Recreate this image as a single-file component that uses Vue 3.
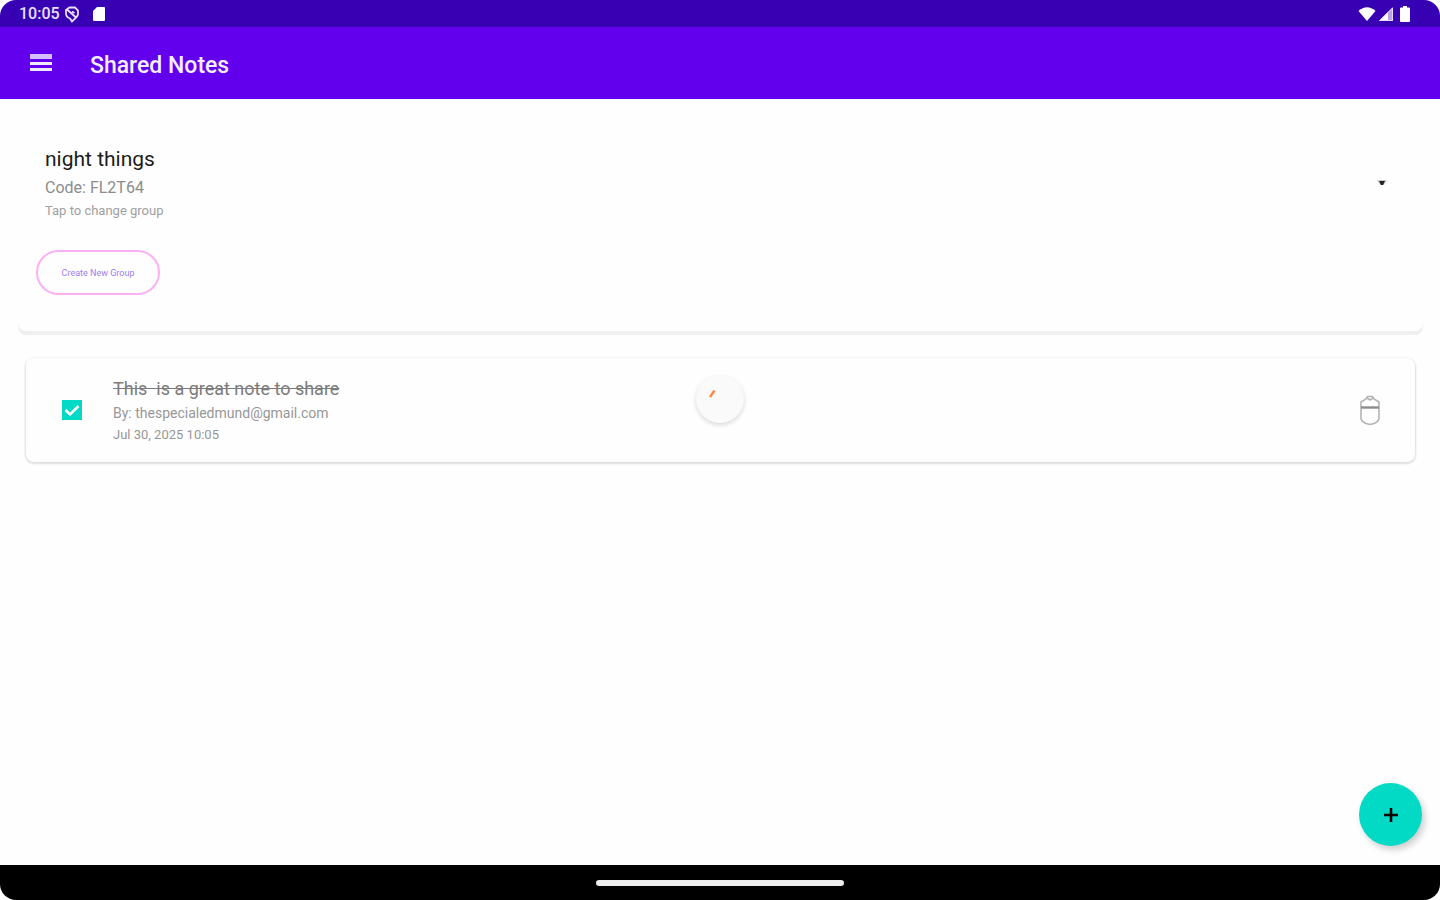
<script setup>
import { ref } from 'vue'

const group = { name: 'night things', code: 'FL2T64' }
const notes = ref([
  {
    id: 1,
    text: 'This  is a great note to share',
    author: 'thespecialedmund@gmail.com',
    date: 'Jul 30, 2025 10:05',
    done: true,
  },
])
</script>

<template>
  <div class="screen">
    <div class="status">
      <span class="clock">10:05</span>
      <svg class="st-shield" viewBox="0 0 16 18" width="16" height="18" fill="none" stroke="#e9e0ff" stroke-width="1.8">
        <path d="M5.500 2.500H11L14 5.500V9.500C13.500 12 11 13 8 16.500L6 13.500C3.500 12.500 2 11 2 8.500V5Z" />
        <path d="M3 4.500L12 12.500M8 6.500L10.500 8" />
      </svg>
      <svg class="st-card" viewBox="0 0 14 16" width="14" height="16" fill="#fff">
        <path d="M5 1H12Q13 1 13 2V14Q13 15 12 15H2Q1 15 1 14V5Z" />
      </svg>
      <div class="status-right">
        <svg viewBox="0 0 18 16" width="18" height="16" fill="#fff">
          <path d="M0.500 5Q9 -2.500 17.500 5L9 15Z" />
        </svg>
        <svg viewBox="0 0 16 16" width="16" height="16">
          <path d="M15 1V15H1Z" fill="#b9a3ec" />
          <path d="M10 6V15H1Z" fill="#fff" />
          <path d="M14.500 2V14.500H2Z" fill="none" stroke="#e6dcff" />
        </svg>
        <svg class="battery" viewBox="0 0 12 18" width="12" height="18" fill="#fff">
          <path d="M4 1H8V2.500H10Q11 2.500 11 3.500V16Q11 17 10 17H2Q1 17 1 16V3.500Q1 2.500 2 2.500H4Z" />
        </svg>
      </div>
    </div>

    <header class="appbar">
      <button class="menu" type="button" aria-label="Open menu">
        <svg viewBox="0 0 24 18" width="24" height="18">
          <path d="M1 0H23V5H1Z" fill="#d3bdfb" />
          <path d="M1 8H23V11H1ZM1 14H23V17H1Z" fill="#f1eaff" />
        </svg>
      </button>
      <h1>Shared Notes</h1>
    </header>

    <main>
      <section class="group">
        <button class="picker" type="button">
          <span class="lines">
            <span class="name">{{ group.name }}</span>
            <span class="code">Code: {{ group.code }}</span>
            <span class="hint">Tap to change group</span>
          </span>
          <svg viewBox="0 0 10 6" width="10" height="6">
            <path d="M0 0H10L7 5H3Z" fill="#ccc" />
            <path d="M2 1H8L6 5H4Z" fill="#222" />
          </svg>
        </button>
        <button class="create" type="button">Create New Group</button>
      </section>

      <ul class="notes">
        <li v-for="note in notes" :key="note.id" class="note">
          <input :id="'note-' + note.id" v-model="note.done" type="checkbox" />
          <svg class="tick" viewBox="0 0 20 20" width="20" height="20">
            <path d="M3.500 10L8 14.500L16.500 6" fill="none" stroke="#fff" stroke-width="2.600" />
          </svg>
          <div class="body">
            <label :for="'note-' + note.id" :class="{ done: note.done }">{{ note.text }}</label>
            <p class="author">By: {{ note.author }}</p>
            <p class="date">{{ note.date }}</p>
          </div>
          <button class="delete" type="button" aria-label="Delete note">
            <svg viewBox="0 0 22 32" width="22" height="32" fill="none" stroke="#b4b4b4" stroke-width="1.600">
              <path d="M2 12V25Q3 28 7 29.500L11 30.500L15 29.500Q19 28 20 25V12" />
              <path d="M2 12V8L7 5L8.500 2.500H13.500L15 5L20 8V12" />
              <path d="M8 4L11 6L14 4" />
              <path d="M2 13.500H20" stroke="#8c8c8c" stroke-width="2.400" />
            </svg>
          </button>
        </li>
      </ul>

      <div class="spinner" role="status" aria-label="Loading">
        <svg viewBox="0 0 48 48" width="48" height="48">
          <path d="M14 22L18.500 15.500" stroke="#ff8a48" stroke-width="2.600" />
        </svg>
      </div>
      <button class="fab" type="button" aria-label="Add note">
        <svg viewBox="0 0 16 16" width="16" height="16">
          <path d="M8 1V15M1 8H15" stroke="#000" stroke-width="2.600" />
        </svg>
      </button>
    </main>

    <footer class="navbar"><span class="handle"></span></footer>
  </div>
</template>

<style>
body {
  margin: 0;
  background: #fff;
}
</style>

<style scoped>
.screen {
  min-height: 100vh;
  display: flex;
  flex-direction: column;
  overflow: hidden;
  border-radius: 16px;
  background: #fefefe;
  font-family: Roboto, "Liberation Sans", sans-serif;
}
svg {
  display: block;
  flex: none;
}
button {
  border: 0;
  padding: 0;
  background: none;
  font-family: inherit;
  cursor: pointer;
}
.status {
  height: 27px;
  display: flex;
  align-items: center;
  padding: 0 29px 0 19px;
  background: #3700b3;
}
.clock {
  width: 45px;
  color: #e9e0ff;
  font-size: 16px;
  font-weight: 500;
  line-height: 27px;
}
.st-card {
  margin-left: 12px;
}
.status-right {
  display: flex;
  align-items: center;
  gap: 2px;
  margin-left: auto;
}
.battery {
  margin-left: 3px;
}
.appbar {
  height: 72px;
  display: flex;
  align-items: center;
  padding: 0 29px;
  gap: 37px;
  background: #6200ee;
}
.menu {
  height: 18px;
}
h1 {
  margin: 0;
  padding-top: 6px;
  color: #f4eeff;
  font-size: 23px;
  font-weight: 500;
  line-height: 28px;
}
main {
  flex: 1;
  position: relative;
  padding: 18px 17px 18px 18px;
}
.group {
  padding: 28px 18px 36px;
  border-radius: 8px;
  background: #fefefe;
  box-shadow: 0 4px 1px #efefef;
}
.picker {
  width: 100%;
  display: flex;
  align-items: center;
  justify-content: space-between;
  padding: 0 18px 0 9px;
  text-align: left;
}
.lines {
  display: flex;
  flex-direction: column;
}
.name {
  color: #1c1c1c;
  font-size: 21px;
  line-height: 28px;
}
.code {
  color: #8c8c8c;
  font-size: 16px;
  line-height: 29px;
}
.hint {
  color: #a0a0a0;
  font-size: 13px;
  line-height: 18px;
}
.create {
  width: 124px;
  height: 45px;
  margin-top: 30px;
  display: block;
  border: 2px solid #fcb0f3;
  border-radius: 23px;
  color: #9a80f0;
  font-size: 9px;
}
.notes {
  margin: 27px 8px 0;
  padding: 0;
  list-style: none;
}
.note {
  position: relative;
  display: flex;
  align-items: center;
  padding: 17px 34px 17px 36px;
  border-radius: 8px;
  background: #fefefe;
  box-shadow: 0 1px 2px 1px #dedede;
}
.note input {
  appearance: none;
  width: 20px;
  height: 20px;
  margin: 0;
  background: #fff;
  border: 2px solid #777;
}
.note input:checked {
  border: 0;
  background: #03dac5;
}
.tick {
  margin-left: -20px;
  pointer-events: none;
}
.body {
  flex: 1;
  margin-left: 31px;
}
.body label {
  display: block;
  color: #7c7c7c;
  font-size: 18px;
  line-height: 28px;
  white-space: pre;
}
.done {
  text-decoration: line-through;
}
.body p {
  margin: 0;
  color: #979797;
  line-height: 21px;
}
.author {
  font-size: 14px;
}
.date {
  font-size: 13px;
}
.spinner {
  position: absolute;
  top: 276px;
  left: calc(50% - 24px);
  width: 48px;
  height: 48px;
  border-radius: 50%;
  background: #fafafa;
  box-shadow: 0 2px 4px #d8d8d8;
}
.fab {
  position: absolute;
  right: 18px;
  bottom: 19px;
  width: 63px;
  height: 63px;
  display: flex;
  align-items: center;
  justify-content: center;
  border-radius: 50%;
  background: #03dac5;
  box-shadow: 3px 4px 6px #cfcfcf;
}
.navbar {
  height: 35px;
  display: flex;
  align-items: center;
  justify-content: center;
  background: #000;
}
.handle {
  width: 248px;
  height: 6px;
  border-radius: 3px;
  background: #ededed;
}
</style>
